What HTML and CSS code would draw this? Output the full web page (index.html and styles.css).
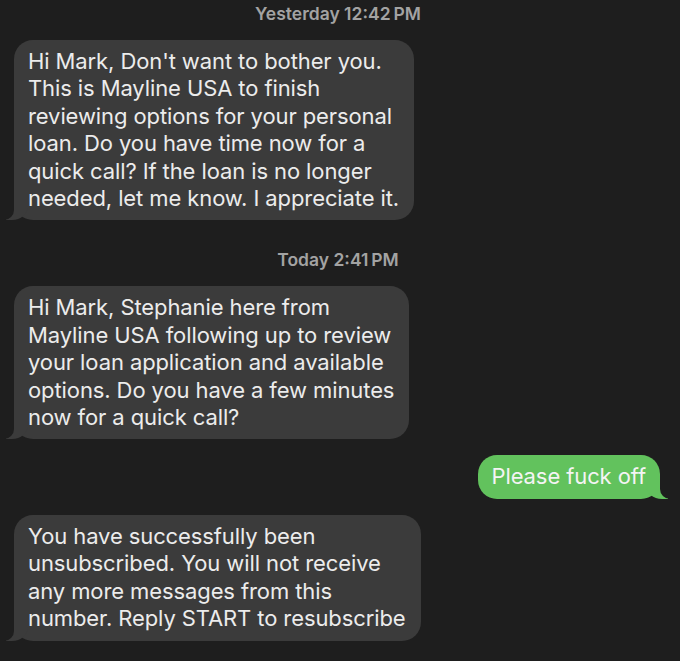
FILE: index.html
```html
<!DOCTYPE html>
<html lang="en">
<head>
 <meta charset="UTF-8">
 <title>Messages</title>
 <link rel="stylesheet" href="styles.css">
</head>
<body>
 <section id="thread">
  <p class="stamp">Yesterday 12:42&#8201;PM</p>
  <div class="chat others">
   <p>Hi Mark, Don't want to bother you.<br>This is Mayline USA to finish<br>reviewing options for your personal<br>loan. Do you have time now for a<br>quick call? If the loan is no longer<br>needed, let me know. I appreciate it.</p>
  </div>

  <p class="stamp">Today 2:41&#8201;PM</p>
  <div class="chat others">
   <p>Hi Mark, Stephanie here from<br>Mayline USA following up to review<br>your loan application and available<br>options. Do you have a few minutes<br>now for a quick call?</p>
  </div>

  <div class="chat me">
   <p>Please fuck off</p>
  </div>

  <div class="chat others">
   <p>You have successfully been<br>unsubscribed. You will not receive<br>any more messages from this<br>number. Reply START to resubscribe</p>
  </div>
 </section>
</body>
</html>
```

FILE: styles.css
```css
*,
*::before,
*::after {
 box-sizing: border-box;
}

body {
 margin: 0;
 background: #1e1e1e;
 font-family: Inter, "Noto Sans", sans-serif;
 height: 661px;
 overflow: hidden;
}

#thread {
 display: flex;
 flex-direction: column;
 padding: 4px 12px 0 14px;
}

.stamp {
 margin: 0 0 16px;
 padding-right: 6px;
 text-align: center;
 font-size: 17.5px;
 font-weight: 600;
 line-height: 20px;
 color: #a3a3a3;
}

.stamp ~ .stamp {
 margin-top: 13px;
}

.chat {
 position: relative;
 width: fit-content;
 padding: 8px 15px 8px 14px;
 border-radius: 19px;
 margin-bottom: 16px;
}

.chat p {
 margin: 0;
 font-size: 22px;
 line-height: 27.4px;
 letter-spacing: -0.1px;
 white-space: nowrap;
}

.others {
 align-self: flex-start;
 background: #3b3b3b;
 color: #ececec;
}

.others:first-of-type {
 margin-bottom: 17px;
}

.me {
 align-self: flex-end;
 background: #62c25d;
 color: #f4f4f4;
 margin-right: 8px;
 padding: 8px 14px;
}

/* bubble tails */
.chat::before,
.chat::after {
 content: "";
 position: absolute;
 bottom: 0;
 height: 22px;
}

.others::before {
 left: -8px;
 width: 22px;
 background: #3b3b3b;
 border-bottom-right-radius: 16px 14px;
}

.others::after {
 left: -26px;
 width: 26px;
 background: #1e1e1e;
 border-bottom-right-radius: 10px;
}

.me::before {
 right: -8px;
 width: 22px;
 background: #62c25d;
 border-bottom-left-radius: 16px 14px;
}

.me::after {
 right: -26px;
 width: 26px;
 background: #1e1e1e;
 border-bottom-left-radius: 10px;
}
```
